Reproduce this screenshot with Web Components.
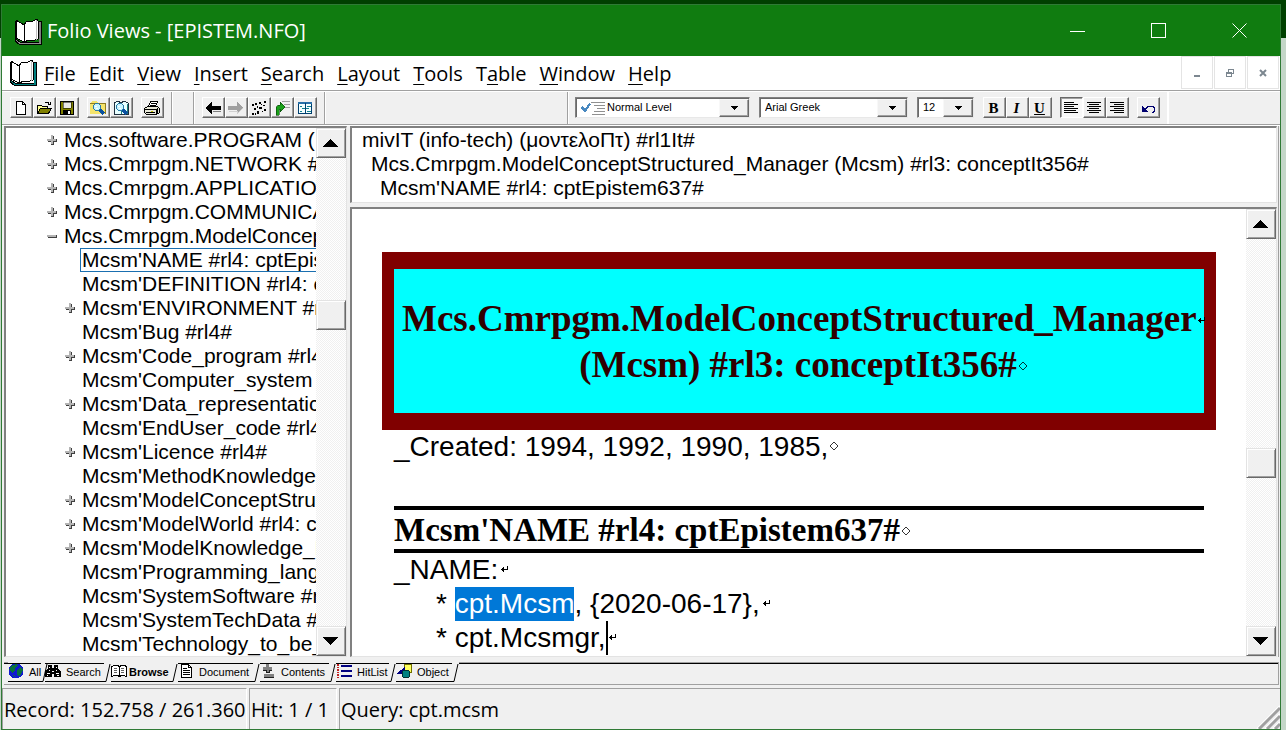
<!DOCTYPE html>
<html lang="en">
<head>
<meta charset="utf-8">
<title>Folio Views - [EPISTEM.NFO]</title>
<style>
html,body{margin:0}
body{font-family:"Liberation Sans",Arial,sans-serif;color:#000;background:#fff}
</style>
</head>
<body>
<folio-window></folio-window>
<script>
const UI = '"Open Sans","Noto Sans",sans-serif';

function define(name, css, html, setup) {
  const tpl = document.createElement('template');
  const base = '*{box-sizing:border-box}button{font:inherit;color:inherit;margin:0;padding:0;border:0;background:none}';
  tpl.innerHTML = '<style>' + base + css + '</style>' + html;
  customElements.define(name, class extends HTMLElement {
    connectedCallback() {
      if (this.shadowRoot) return;
      const root = this.attachShadow({ mode: 'open' });
      root.append(tpl.content.cloneNode(true));
      if (setup) setup.call(this, root);
    }
  });
}

const lens = '<path d="M9 9l5 5" stroke="#0a50a0" stroke-width="3"/><circle cx="7" cy="7" r="3.5" fill="#c8f4ff" stroke="#2a7aa8"/><path d="M5 6h2M6 8h2" stroke="#fff"/>';
const book = (edge, side) => `<path d="M1 4v20l4 3h22V4h-2v21H6l-3-2z" fill="${edge}" stroke="#000"/><path d="M25 5h2v21h-2z" fill="${side}"/><path d="M2 3l8 5v17l-8-4z" fill="#fff" stroke="#000"/><path d="M10 8l2-3 4-1h3l4-2 1 2v18l-3 1h-6l-5 2z" fill="#fff" stroke="#000"/><path d="M22 3v20" stroke="#c0c0c0"/>`;
const lines = rows => rows.map((r, i) => `M${r[0]} ${2.5 + i * 2}h${r[1]}`).join('');
const ICONS = {
  bookGray: [28, book('#909090', '#808080')],
  bookTeal: [28, book('#008080', '#008080')],
  blank: [16, '<path d="M3.500 1.500h6l3 3v10h-9z" fill="#fff" stroke="#000"/><path d="M9.500 1.500v3h3" fill="none" stroke="#000"/>'],
  open: [16, '<path d="M1.500 13.500v-8h4l1 1h5v3" fill="#ffff90" stroke="#000"/><path d="M1.500 13.500l3-5h11l-3 5z" fill="#808000" stroke="#000"/><path d="M9 3q3-2 4 1M14.500 1.500v3h-3" fill="none" stroke="#000"/>'],
  save: [16, '<path d="M1.500 1.500h13v13h-13z" fill="#808000" stroke="#000"/><path d="M4 2h8v6H4z" fill="#e8e8e8" stroke="#000" stroke-width=".5"/><path d="M4 10h8v5H4z" fill="#000"/><path d="M9 11h2v3H9z" fill="#fff"/>'],
  find: [16, '<path d="M0 14V3l2-2h4l2 2h7v11z" fill="#f4e46c"/><path d="M0 3h15v11" fill="none" stroke="#907c20"/>' + lens],
  bookfind: [16, '<path d="M1 3l4-2 3 2 3-2 4 2v11H1z" fill="#e8ffff" stroke="#203040"/><path d="M8 3v11M14 4v10" stroke="#188080"/>' + lens],
  print: [16, '<path d="M4.500 6.500l2-5h7l-2 5" fill="#fff" stroke="#000"/><path d="M7 3h5M6 5h5" stroke="#000"/><path d="M.500 8.500l3-2h10l2 2v4l-3 2h-10l-2-2z" fill="#e8e8d8" stroke="#000"/><path d="M1 9.500h11v5M2 12.500h9M13.500 8v5" fill="none" stroke="#000"/><path d="M7 11h2" stroke="#c0c000"/>'],
  back: [16, '<path d="M0 8l7-6v4h9v4H7v4z" fill="#000"/><path d="M8 11h8v-1" fill="none" stroke="#808080"/>'],
  forward: [16, '<path d="M16 8L9 2v4H0v4h9v4z" fill="#a0a0a0"/><path d="M1 11h8v3l6-6" fill="none" stroke="#d0d0d0"/>'],
  trail: [16, '<path d="M1 4h2v2H1zM4 3h2v2H4zM8 2h2v2H8zM13 1h2v2h-2zM3 8h2v2H3zM6 6h1v2H6zM8 7h3v2H8zM12 5h2v1h-2zM13 9h2v2h-2zM6 11h2v3H6zM1 13h2v2H1zM4 13h1v2H4zM11 11h1v1h-1zM10 4h1v1h-1z" fill="#000"/>'],
  jump: [16, '<path d="M8 1.500h8M10 4.500h6M10 7.500h6" stroke="#a0a0a0"/><path d="M2 15V9q0-4 4-4V2l5 5-5 5V9H5v6z" fill="#18a018" stroke="#064006" stroke-width=".6"/>'],
  split: [16, '<path d="M1.500 2.500h13v11h-13z" fill="#f4ffff" stroke="#004070"/><path d="M1 2h14v2H1z" fill="#2870a8"/><path d="M8.500 3v11" stroke="#004070"/><path d="M3 6.500h2M5 8.500h3M3 11.500h2M10 6.500h4M9 8.500h3M10 11.500h4" stroke="#108090"/>'],
  check: [26, '<path d="M1 13l2-2 3 3 4-6 2 1-6 9z" fill="#4888c0"/><path d="M12 7.500h14M15 10.500h11M18 13.500h8M15 16.500h11M13 19.500h13" stroke="#909090"/>'],
  left: [16, `<path d="${lines([[1,10],[1,14],[1,10],[1,14],[1,12],[1,14]])}" stroke="#000"/>`],
  center: [16, `<path d="${lines([[1,14],[3,10],[1,14],[3,10],[1,14],[3,10]])}" stroke="#000"/>`],
  right: [16, `<path d="${lines([[1,14],[5,10],[1,14],[5,10],[1,14],[5,10]])}" stroke="#000"/>`],
  undo: [16, '<path d="M4.500 10l4-4h4l2 2v3l-2 2" fill="none" stroke="#000070"/><path d="M2 6v6h6z" fill="#000070"/>'],
  plus: [10, '<path d="M4 1h3v3h3v3H7v3H4V7H1V4h3z" fill="#404040"/><path d="M4 0h2v4h3v2H6v3H4V6H0V4h4z" fill="#b4b4b4"/>'],
  minus: [10, '<path d="M1 4h9v3H1z" fill="#404040"/><path d="M0 4h9v2H0z" fill="#b4b4b4"/>'],
  globe: [16, '<circle cx="8" cy="8" r="7.500" fill="#1018d0"/><path d="M3 3l5-2 2 2-3 2v3l-3 2-3-3zM9 7l4-3 2 3-2 4-2 3-2-2zM4 12l3 1v2z" fill="#087040"/>'],
  binoc: [16, '<path d="M3 2h4v3h2V2h4v3l3 4v5H9v-3H7v3H0V9l3-4z"/><path d="M4 4.500h1M11 4.500h1M2 10.500h3M11 10.500h3M4 7.500h1M11 7.500h1M7 8.500h2M2 12.500h1M12 12.500h2" stroke="#fff"/>'],
  reader: [16, '<path d="M.500 3.500l3-1h3l2 1 2-1h3l2 1v10l-3-1h-2l-2 1-2-1h-3l-3 1z" fill="#fff" stroke="#000"/><path d="M8.500 3v11" stroke="#000"/><path d="M3 5.500h3M3 7.500h3M3 9.500h3M10 5.500h3M10 7.500h3M10 9.500h3" stroke="#606060"/>'],
  page: [16, '<path d="M3.500 1.500h7l3 3v10h-10z" fill="#fff" stroke="#000"/><path d="M10.500 1.500v3h3M5 5.500h4M5 7.500h7M5 9.500h7M5 11.500h7" fill="none" stroke="#000"/>'],
  outline: [16, '<path d="M6 1h3v3h3v3H9v2H6V7H3V4h3zM4 11h10v3H4z" fill="#808080"/><path d="M3 7.500h3v2h3v-2h3M4 14.500h10" fill="none" stroke="#202020"/>'],
  hits: [16, '<path d="M5 2h11v2H5zM5 7h11v2H5zM5 12h11v2H5z" fill="#000080"/><path d="M1 1h2v2H1zM1 4h2v1H1zM1 6h2v2H1zM1 9h2v1H1zM1 11h2v2H1zM1 14h2v1H1z" fill="#c02020"/>'],
  object: [16, '<path d="M8.500 1.500h7v8h-7z" fill="#ffff60" stroke="#707000"/><path d="M0 11l9-7v7z" fill="#000080"/><circle cx="10" cy="11" r="4" fill="#008080" stroke="#003030"/>'],
  up: [16, '<path d="M0 12h16L8 4z"/>'],
  down: [16, '<path d="M0 4h16l-8 8z"/>'],
  tick: [8, '<path d="M0 2h8L4 6z"/>'],
  min: [16, '<path d="M0 8.500h15" stroke="#fff"/>'],
  max: [16, '<path d="M.500 .500h14v14H.500z" fill="none" stroke="#fff"/>'],
  close: [16, '<path d="M.500 .500l14 14M14.500 .500l-14 14" stroke="#fff" shape-rendering="auto"/>'],
  cmin: [8, '<path d="M1 6h6v2H1z" fill="#7c8790"/>'],
  crest: [8, '<path d="M2.500 2.500v-2h5v4h-2M.500 3.500h5v4h-5zM.500 4h5" fill="none" stroke="#7c8790"/>'],
  cclose: [8, '<path d="M1 1l6 6M7 1L1 7" stroke="#7c8790" stroke-width="2" shape-rendering="auto"/>'],
  ret: [8, '<path d="M7.500 1v3.500H1M3.500 2v5M2.500 3v3" fill="none" stroke="#000"/>'],
  dia: [8, '<path d="M4 0l4 4-4 4-4-4z" fill="none" stroke="#000" stroke-width=".8" shape-rendering="auto"/>'],
  grip: [24, '<path d="M1 24L24 1M9 24L24 9M17 24l7-7" stroke="#fff" stroke-width="2" shape-rendering="auto"/><path d="M3 24L24 3M11 24l13-13M19 24l5-5" stroke="#a0a0a0" stroke-width="3" shape-rendering="auto"/>'],
};

define('folio-icon', ':host{display:inline-block;line-height:0;flex:none}svg{display:block;shape-rendering:crispEdges}', '<span></span>', function (root) {
  const [s, body] = ICONS[this.getAttribute('name')];
  root.querySelector('span').innerHTML = `<svg width="${s}" height="${s}" viewBox="0 0 ${s} ${s}" aria-hidden="true">${body}</svg>`;
});

define('title-bar', `
:host{display:flex;align-items:stretch;height:51px;background:#107c10;color:#fff;font:20px/27px ${UI}}
.name{display:flex;align-items:center;gap:5px;padding-left:12px;flex:1}
button{width:81px;display:grid;place-items:center}`,
`<div class="name"><folio-icon name="bookGray"></folio-icon><span><slot></slot></span></div>
<button aria-label="Minimize"><folio-icon name="min"></folio-icon></button>
<button aria-label="Maximize"><folio-icon name="max"></folio-icon></button>
<button aria-label="Close"><folio-icon name="close"></folio-icon></button>`);

define('menu-bar', `
:host{display:flex;height:34px;background:#fff;font:20px/27px ${UI}}
nav{display:flex;align-items:center;gap:13px;padding-left:7px;flex:1}
folio-icon{margin-right:-6px;align-self:flex-start;padding-top:2px}
u{text-underline-offset:3px;text-decoration-thickness:1px}
.child{display:flex;gap:1px;padding-right:1px}
.child button{width:32px;height:33px;border:1px solid #e4e4e4;display:grid;place-items:center}
.child folio-icon{margin:0;padding:0;align-self:center}`,
`<nav><folio-icon name="bookTeal"></folio-icon></nav>
<div class="child"><button aria-label="Minimize document"><folio-icon name="cmin"></folio-icon></button><button aria-label="Restore document"><folio-icon name="crest"></folio-icon></button><button aria-label="Close document"><folio-icon name="cclose"></folio-icon></button></div>`,
function (root) {
  const nav = root.querySelector('nav');
  for (const t of ['File', 'Edit', 'View', 'Insert', 'Search', 'Layout', 'Tools', 'T_able', 'Window', 'Help']) {
    const b = document.createElement('button');
    b.innerHTML = t.includes('_') ? t.replace(/_(.)/, '<u>$1</u>') : `<u>${t[0]}</u>${t.slice(1)}`;
    nav.append(b);
  }
});

define('tool-button', `
:host{display:block}
button{width:23px;height:21px;display:grid;place-items:center;padding-right:2px;background:#f0f0f0;border:1px solid;border-color:#fff #696969 #696969 #fff;box-shadow:inset -1px -1px #a0a0a0;font:bold 15px/18px "Liberation Serif",serif}
:host([pressed]) button{background:#f8f8f8;border-color:#696969 #fff #fff #696969;box-shadow:inset 1px 1px #a0a0a0}`,
`<button><slot></slot></button>`, function (root) {
  root.querySelector('button').setAttribute('aria-label', this.getAttribute('label'));
  if (this.hasAttribute('icon')) {
    const i = document.createElement('folio-icon');
    i.setAttribute('name', this.getAttribute('icon'));
    root.querySelector('slot').replaceWith(i);
  }
});

define('combo-box', `
:host{display:grid;height:21px;align-items:center;background:#fff;border:1px solid;border-color:#808080 #e8e8e8 #e8e8e8 #808080;box-shadow:inset 1px 1px #696969}
select{grid-area:1/1;appearance:none;border:0;margin:0;padding:0 30px 0 5px;width:100%;height:17px;background:none;color:#000;font:11px/17px "Liberation Sans",Arial,sans-serif}
:host([icon]) select{padding-left:31px}
.art,.arrow{grid-area:1/1;pointer-events:none}
.art{justify-self:start;padding-left:3px;height:19px;overflow:hidden;display:flex;align-items:center}
.arrow{justify-self:end;width:30px;height:18px;display:grid;place-items:center;background:#f0f0f0;border:1px solid;border-color:#f8f8f8 #696969 #696969 #f8f8f8;box-shadow:inset -1px -1px #a0a0a0}`,
`<select><option></option></select><span class="art"></span><span class="arrow"><folio-icon name="tick"></folio-icon></span>`, function (root) {
  root.querySelector('select').setAttribute('aria-label', this.getAttribute('label'));
  root.querySelector('option').textContent = this.getAttribute('value');
  if (this.hasAttribute('icon')) root.querySelector('.art').innerHTML = `<folio-icon name="${this.getAttribute('icon')}"></folio-icon>`;
});

define('tool-bar', `
:host{display:flex;height:36px;background:#f0f0f0;border-top:1px solid #a0a0a0;border-bottom:1px solid #fff;box-shadow:inset 0 1px #fff,inset 0 -1px #a0a0a0;padding:1px 0}
section{display:flex;gap:8px;padding:5px 7px 0;border-right:1px solid #a0a0a0;box-shadow:1px 0 #fff;flex:none}
section div{display:flex}
.pad{width:22px}.nav{margin-left:1px}.gap{width:243px}.format{border-right-color:#fff}
.combos{gap:9px;margin-right:1px}
.level{width:175px}.font{width:149px}.size{width:57px}
.files{padding-left:8px}`,
`<section class="files"><div><tool-button icon="blank" label="New"></tool-button><tool-button icon="open" label="Open"></tool-button><tool-button icon="save" label="Save"></tool-button></div>
<div><tool-button icon="find" label="Search"></tool-button><tool-button icon="bookfind" label="Search infobase"></tool-button></div>
<div><tool-button icon="print" label="Print"></tool-button></div></section>
<section class="pad"></section>
<section class="nav"><div><tool-button icon="back" label="Back"></tool-button><tool-button icon="forward" label="Forward"></tool-button><tool-button icon="trail" label="Trail"></tool-button><tool-button icon="jump" label="Jump"></tool-button><tool-button icon="split" label="Contents"></tool-button></div></section>
<section class="gap"></section>
<section class="format"><div class="combos"><combo-box class="level" label="Level" icon="check" value="Normal Level"></combo-box><combo-box class="font" label="Font" value="Arial Greek"></combo-box><combo-box class="size" label="Size" value="12"></combo-box></div>
<div><tool-button label="Bold">B</tool-button><tool-button label="Italic"><i>I</i></tool-button><tool-button label="Underline"><u>U</u></tool-button></div>
<div><tool-button pressed icon="left" label="Align left"></tool-button><tool-button icon="center" label="Center"></tool-button><tool-button icon="right" label="Align right"></tool-button></div>
<div><tool-button icon="undo" label="Undo"></tool-button></div></section>`);

define('scroll-rail', `
:host{display:flex;flex-direction:column;width:30px;background:repeating-conic-gradient(#fff 0 25%,#f0f0f0 0 50%) 0 0/2px 2px}
button,.thumb{flex:none;width:30px;height:30px;background:#f0f0f0;border:1px solid;border-color:#e3e3e3 #696969 #696969 #e3e3e3;box-shadow:inset 1px 1px #fff,inset -1px -1px #a0a0a0;display:grid;place-items:center}
button{padding-right:2px}
.a{flex:var(--before) 0 0}.b{flex:var(--after) 0 0}`,
`<button aria-label="Scroll up"><folio-icon name="up"></folio-icon></button><div class="a"></div><div class="thumb"></div><div class="b"></div><button aria-label="Scroll down"><folio-icon name="down"></folio-icon></button>`);

const PANE = 'background:#fff;border:solid;border-width:2px 1px 1px 2px;border-color:#808080 #e3e3e3 #e3e3e3 #808080;';

define('contents-tree', `
:host{display:flex;${PANE}font-size:21px;line-height:24px}
ul{list-style:none;margin:0;padding:0 0 0 41px;flex:1;min-width:0;overflow:hidden}
li{display:flex;align-items:center;height:24px;white-space:nowrap}
li.sub{padding-left:18px}
.mark{width:15px;flex:none;display:flex;line-height:0}
.text{flex:1;border:1px solid transparent;border-right:0;padding-left:1px;line-height:22px}
.on .text{border-color:#1a6fb0}
scroll-rail{--before:142;--after:296}`,
`<ul></ul><scroll-rail></scroll-rail>`, function (root) {
  const rows = [
    ['+', 0, 'Mcs.software.PROGRAM ('], ['+', 0, 'Mcs.Cmrpgm.NETWORK #'], ['+', 0, 'Mcs.Cmrpgm.APPLICATION'],
    ['+', 0, 'Mcs.Cmrpgm.COMMUNICA'], ['-', 0, 'Mcs.Cmrpgm.ModelConcep'], ['', 1, "Mcsm'NAME #rl4: cptEpis", 1],
    ['', 1, "Mcsm'DEFINITION #rl4: c"], ['+', 1, "Mcsm'ENVIRONMENT #r"], ['', 1, "Mcsm'Bug #rl4#"], ['+', 1, "Mcsm'Code_program #rl4"],
    ['', 1, "Mcsm'Computer_system "], ['+', 1, "Mcsm'Data_representatic"], ['', 1, "Mcsm'EndUser_code #rl4"], ['+', 1, "Mcsm'Licence #rl4#"],
    ['', 1, "Mcsm'MethodKnowledge "], ['+', 1, "Mcsm'ModelConceptStruc"], ['+', 1, "Mcsm'ModelWorld #rl4: c"], ['+', 1, "Mcsm'ModelKnowledge_E"],
    ['', 1, "Mcsm'Programming_langu"], ['', 1, "Mcsm'SystemSoftware #r"], ['', 1, "Mcsm'SystemTechData #"], ['', 1, "Mcsm'Technology_to_be_"]];
  const names = { '+': 'plus', '-': 'minus' };
  root.querySelector('ul').innerHTML = rows.map(([m, sub, t, on]) =>
    `<li class="${sub ? 'sub' : ''}${on ? ' on' : ''}"><span class="mark">${m ? `<folio-icon name="${names[m]}"></folio-icon>` : ''}</span><span class="text">${t}</span></li>`).join('');
});

define('reference-pane', `
:host{display:block;${PANE}padding-bottom:2px;font-size:21px;line-height:24px;white-space:nowrap;overflow:hidden}
div{padding-left:10px}div+div{padding-left:19px}div+div+div{padding-left:28px}`,
`<div>mivIT (info-tech) (μοντελοΠτ) #rl1It#</div><div>Mcs.Cmrpgm.ModelConceptStructured_Manager (Mcsm) #rl3: conceptIt356#</div><div>Mcsm'NAME #rl4: cptEpistem637#</div>`);

define('document-pane', `
:host{display:flex;${PANE}}
article{flex:1;min-width:0;padding:43px 30px 0;font-size:28px;line-height:34px;overflow:hidden}
h1,h2,p{margin:0}
h1,h2{font-family:"Liberation Serif","Times New Roman",serif;font-weight:bold;white-space:nowrap}
h1{border:solid #800000;border-width:17px 12px;background:#0ff;color:#300000;padding:27px 0 25px 8px;font-size:37px;line-height:46px;text-align:center}
.body{padding:0 12px}
h2{margin-top:42px;border:solid #000;border-width:4px 0;padding-top:1px;font-size:33px;line-height:38px}
.item{padding-left:42px}
mark{display:inline-block;background:#0078d7;color:#fff}
.caret{display:inline-block;width:2px;height:34px;background:#000;vertical-align:top}
folio-icon{vertical-align:middle;margin-left:2px;padding-bottom:5px}
.caret+folio-icon,.flush{margin-left:0}`+`
scroll-rail{--before:209;--after:148}`,
`<article><h1>Mcs.Cmrpgm.ModelConceptStructured_Manager<folio-icon class="flush" name="ret"></folio-icon><br>(Mcsm) #rl3: conceptIt356#<folio-icon name="dia"></folio-icon></h1>
<div class="body"><p>_Created: 1994, 1992, 1990, 1985,<folio-icon name="dia"></folio-icon></p>
<h2>Mcsm'NAME #rl4: cptEpistem637#<folio-icon name="dia"></folio-icon></h2>
<p>_NAME:<folio-icon name="ret"></folio-icon></p>
<p class="item">* <mark>cpt.Mcsm</mark>, {2020-06-17},<folio-icon name="ret"></folio-icon></p>
<p class="item">* cpt.Mcsmgr,<span class="caret"></span><folio-icon name="ret"></folio-icon></p></div></article><scroll-rail></scroll-rail>`);

define('view-tab', `
:host{display:block}
button{display:flex;width:100%;height:19px;align-items:flex-start}
.face{flex:1;height:19px;display:flex;align-items:center;gap:5px;border-top:1px solid #000;border-bottom:1px solid #000;white-space:nowrap}
.text{padding-bottom:2px}
:host([active]) .face{border-top-color:transparent;font-weight:bold;gap:2px}
svg{display:block;flex:none}`,
`<button><span class="face"><span class="art"></span><span class="text"><slot></slot></span></span><svg width="7" height="19" viewBox="0 0 7 19" aria-hidden="true"><path d="M0 18.500h2L6 1" fill="none" stroke="#000"/></svg></button>`, function (root) {
  root.querySelector('.art').innerHTML = `<folio-icon name="${this.getAttribute('icon')}"></folio-icon>`;
});

define('view-tabs', `
:host{display:block;background:#f0f0f0;height:31px;padding:5px 1px 3px 2px}
.strip{display:flex;height:23px;border-bottom:1px solid #a0a0a0;border-right:1px solid #a0a0a0;font-size:11px;line-height:16px}
.strip::before{content:"";width:4px;border-top:1px solid #a0a0a0;box-shadow:inset 0 1px #000;height:2px}
.strip::after{content:"";flex:1;border-top:1px solid #a0a0a0;box-shadow:inset 0 1px #000;height:2px}
view-tab{padding-top:1px;flex:none}`,
`<div class="strip">
<view-tab icon="globe" style="width:37px">All</view-tab><view-tab icon="binoc" style="width:66px">Search</view-tab><view-tab active icon="reader" style="width:67px">Browse</view-tab><view-tab icon="page" style="width:82px">Document</view-tab><view-tab icon="outline" style="width:76px">Contents</view-tab><view-tab icon="hits" style="width:60px">HitList</view-tab><view-tab icon="object" style="width:63px">Object</view-tab></div>`);

define('status-bar', `
:host{display:flex;gap:2px;height:41px;background:#f0f0f0;font:20px/42px ${UI}}
span{border:solid;border-width:1px 1px 0;border-color:#a0a0a0 #fff #a0a0a0 #a0a0a0;padding-left:1px;white-space:nowrap;flex:none}
.r{width:245px}.h{width:88px}.q{flex:1;border-right:0}
folio-icon{align-self:flex-end;margin-left:-26px}`,
`<span class="r">Record: 152.758 / 261.360</span><span class="h">Hit: 1 / 1</span><span class="q">Query: cpt.mcsm</span><folio-icon name="grip"></folio-icon>`);

define('folio-window', `
:host{display:flex;min-height:100vh;box-sizing:border-box;padding:4px 5px 4px 1px;background:linear-gradient(#004000 0 38px,#c4d6c8 38px 730px,#fff 730px)}
.win{flex:1;min-width:0;display:flex;flex-direction:column;border:1px solid #2f7a35;background:#f0f0f0}
main{flex:1;display:grid;grid-template-columns:343px 1fr;gap:3px;padding:0 1px 0 2px}
.right{display:flex;flex-direction:column;gap:4px;min-width:0;border-right:1px solid #a0a0a0;padding-right:1px}
document-pane{flex:1}`,
`<div class="win"><title-bar>Folio Views - [EPISTEM.NFO]</title-bar><menu-bar></menu-bar><tool-bar></tool-bar>
<main><contents-tree></contents-tree><div class="right"><reference-pane></reference-pane><document-pane></document-pane></div></main>
<view-tabs></view-tabs><status-bar></status-bar></div>`);
</script>
</body>
</html>
